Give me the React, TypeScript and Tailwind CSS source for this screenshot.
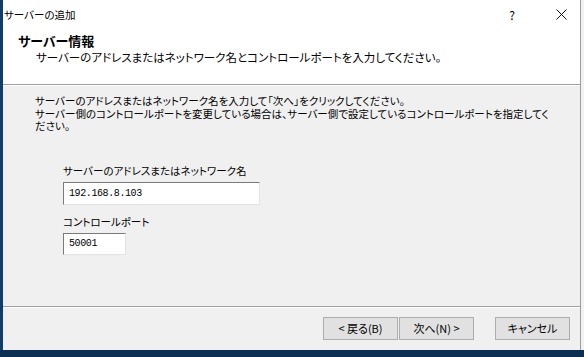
import React from 'react';

const jp = { fontFamily: '"Noto Sans CJK JP", "Noto Sans", sans-serif', fontFeatureSettings: '"palt"' };

function Field({ label, value, width }: { label: string; value: string; width: string }) {
  return (
    <div className="flex flex-col">
      <div className="text-[10.5px] leading-[14px] text-black">{label}</div>
      <div
        className={`${width} mt-[4px] bg-white border-t border-l border-t-[#7a7a7a] border-l-[#7a7a7a] border-b border-r border-b-[#e3e3e3] border-r-[#e3e3e3] flex items-center pl-[5px]`}
      >
        <span className="text-[10px] text-black tracking-[-0.4px]" style={{ fontFamily: '"Liberation Mono", monospace' }}>
          {value}
        </span>
      </div>
    </div>
  );
}

function Button({ children, className = '' }: { children: React.ReactNode; className?: string }) {
  return (
    <button className={`w-[75px] h-[23px] bg-[#e1e1e1] border border-[#adadad] text-[11px] text-black flex items-center justify-center ${className}`}>
      {children}
    </button>
  );
}

export default function App() {
  return (
    <div className="w-[584px] h-[357px] bg-[#0c2f52] flex flex-col overflow-hidden" style={jp}>
      <div className="flex h-[350px]">
        <div className="w-[3px] bg-[#0f3e6c]" />
        <div className="w-[578px] flex flex-col bg-white border-r border-[#9c9c9c]">
          {/* title bar */}
          <div className="h-[29px] flex items-center pl-[1px] text-[10.5px] text-black">
            <span>サーバーの追加</span>
            <span className="ml-auto mr-[41px] text-[12px]">?</span>
            <svg width="11" height="11" viewBox="0 0 11 11" className="mr-[13px]">
              <path d="M0.5 0.5 L10.5 10.5 M10.5 0.5 L0.5 10.5" stroke="#111" strokeWidth="1" />
            </svg>
          </div>
          {/* header */}
          <div className="h-[55px] pl-[15px] pt-[5px]">
            <div className="text-[13px] leading-[14px] font-bold text-black">サーバー情報</div>
            <div className="text-[11.5px] leading-[16px] mt-[1px] pl-[18px] text-black">
              サーバーのアドレスまたはネットワーク名とコントロールポートを入力してください。
            </div>
          </div>
          <div className="h-[2px] border-t border-[#a0a0a0] bg-white" />
          {/* body */}
          <div className="flex-1 bg-[#f0f0f0] flex flex-col">
            <div className="pl-[32px] pr-[25px] pt-[9px] text-[10.5px] leading-[12.5px] text-black">
              <div>サーバーのアドレスまたはネットワーク名を入力して「次へ」をクリックしてください。</div>
              <div>サーバー側のコントロールポートを変更している場合は、サーバー側で設定しているコントロールポートを指定してください。</div>
            </div>
            <div className="pl-[60px] mt-[31px] flex flex-col gap-[10px]">
              <Field label="サーバーのアドレスまたはネットワーク名" value="192.168.8.103" width="w-[197px] h-[23px]" />
              <Field label="コントロールポート" value="50001" width="w-[63px] h-[22px]" />
            </div>
          </div>
          <div className="h-[2px] border-t border-[#a0a0a0] bg-white" />
          {/* footer */}
          <div className="h-[42px] bg-[#f0f0f0] flex items-start justify-end pt-[9px] pr-[10px]">
            <Button>&lt; 戻る(B)</Button>
            <Button className="ml-[1px]">次へ(N) &gt;</Button>
            <Button className="ml-[21px]">キャンセル</Button>
          </div>
        </div>
        <div className="flex-1 bg-[#f2f2f2]" />
      </div>
    </div>
  );
}
